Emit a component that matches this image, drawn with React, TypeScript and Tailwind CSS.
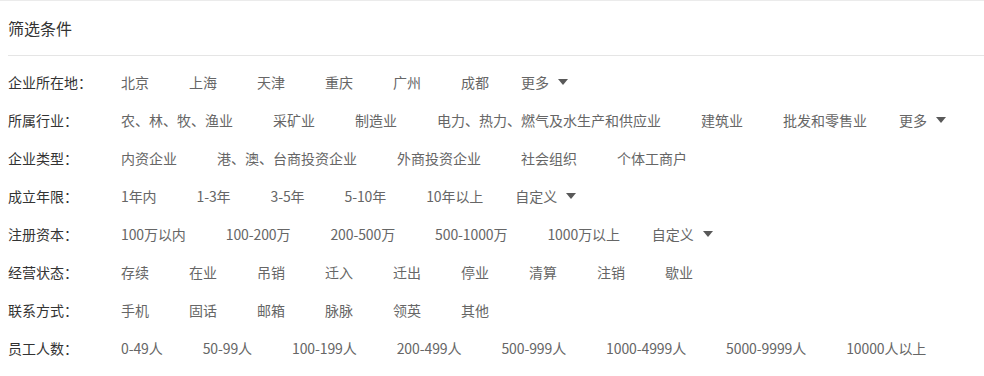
const rows: { label: string; items: string[]; more?: string }[] = [
  { label: '企业所在地：', items: ['北京', '上海', '天津', '重庆', '广州', '成都'], more: '更多' },
  {
    label: '所属行业：',
    items: ['农、林、牧、渔业', '采矿业', '制造业', '电力、热力、燃气及水生产和供应业', '建筑业', '批发和零售业'],
    more: '更多',
  },
  { label: '企业类型：', items: ['内资企业', '港、澳、台商投资企业', '外商投资企业', '社会组织', '个体工商户'] },
  { label: '成立年限：', items: ['1年内', '1-3年', '3-5年', '5-10年', '10年以上'], more: '自定义' },
  { label: '注册资本：', items: ['100万以内', '100-200万', '200-500万', '500-1000万', '1000万以上'], more: '自定义' },
  { label: '经营状态：', items: ['存续', '在业', '吊销', '迁入', '迁出', '停业', '清算', '注销', '歇业'] },
  { label: '联系方式：', items: ['手机', '固话', '邮箱', '脉脉', '领英', '其他'] },
  {
    label: '员工人数：',
    items: ['0-49人', '50-99人', '100-199人', '200-499人', '500-999人', '1000-4999人', '5000-9999人', '10000人以上'],
  },
];

function Caret() {
  return (
    <svg width="10" height="6" viewBox="0 0 10 6" className="ml-[9px]">
      <path d="M0 0h10L5 6z" fill="#595959" />
    </svg>
  );
}

export default function App() {
  return (
    <div
      className="w-[984px] h-[376px] bg-white border-t border-[#ebebeb] overflow-hidden text-[14px]"
      style={{ fontFamily: '"Microsoft YaHei", "Noto Sans CJK SC", sans-serif' }}
    >
      <div className="h-[54px] pl-2 flex items-center text-[16px] text-[#333]">筛选条件</div>
      <div className="ml-2 border-t border-[#e5e5e5]" />
      <div className="pt-[7px] pl-2">
        {rows.map((r) => (
          <div key={r.label} className="h-[38px] flex items-center">
            <div className="w-[113px] text-[#333]">{r.label}</div>
            <div className="flex items-center text-[#666]">
              {r.items.map((it, i) => {
                const last = i === r.items.length - 1 && r.more;
                const digits = /\d/.test(it);
                return (
                  <span
                    key={it}
                    className={`${last ? 'mr-[32px]' : 'mr-[40px]'} ${digits ? 'tracking-[-0.1px]' : ''}`}
                  >
                    {it}
                  </span>
                );
              })}
              {r.more && (
                <span className="flex items-center">
                  {r.more}
                  <Caret />
                </span>
              )}
            </div>
          </div>
        ))}
      </div>
    </div>
  );
}
